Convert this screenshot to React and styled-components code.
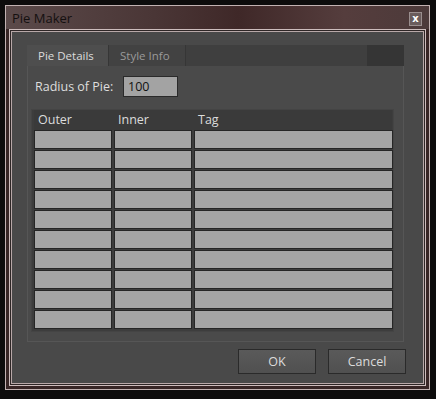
import React from 'react'
import styled, { createGlobalStyle } from 'styled-components'

const GlobalStyle = createGlobalStyle`
  html, body {
    margin: 0;
    padding: 0;
    background: #0d0c0c;
  }
  body {
    font-family: "Open Sans", "Noto Sans", "Liberation Sans", sans-serif;
  }
`

const rows = Array.from({ length: 10 })

export default function App() {
  return (
    <>
      <GlobalStyle />
      <Screen>
        <Window>
          <TitleBar>
            <Title>Pie Maker</Title>
            <CloseBtn>x</CloseBtn>
          </TitleBar>
          <Content>
            <TabGroup>
              <TabBar>
                <Tab active>Pie Details</Tab>
                <Tab>Style Info</Tab>
                <TabFill />
                <TabEnd />
              </TabBar>
              <Panel>
                <RadiusRow>
                  <Label>Radius of Pie:</Label>
                  <Input defaultValue="100" />
                </RadiusRow>
                <Table>
                  <HeaderRow>
                    <HeadCell>Outer</HeadCell>
                    <HeadCell>Inner</HeadCell>
                    <HeadCell>Tag</HeadCell>
                  </HeaderRow>
                  <Grid>
                    {rows.map((_, i) => (
                      <React.Fragment key={i}>
                        <Cell />
                        <Cell />
                        <Cell />
                      </React.Fragment>
                    ))}
                  </Grid>
                </Table>
              </Panel>
            </TabGroup>
            <Buttons>
              <Button>OK</Button>
              <Button>Cancel</Button>
            </Buttons>
          </Content>
        </Window>
      </Screen>
    </>
  )
}

const Screen = styled.div`
  width: 436px;
  height: 399px;
  padding: 5px 0 0 5px;
  box-sizing: border-box;
`
const Window = styled.div`
  width: 425px;
  height: 385px;
  box-sizing: border-box;
  border: 1px solid #c2b2b2;
  background: #382626;
  padding: 0 3px 3px 3px;
  display: flex;
  flex-direction: column;
`
const TitleBar = styled.div`
  height: 23px;
  margin: 0 -3px;
  padding: 0 7px 0 6px;
  display: flex;
  align-items: center;
  justify-content: space-between;
  background: linear-gradient(90deg, #5b4a4a 0%, #4a3636 35%, #3f2828 55%, #553d3d 80%, #4c3a3a 100%);
`
const Title = styled.div`
  font-size: 13px;
  color: #141010;
  padding-top: 1px;
`
const CloseBtn = styled.div`
  width: 13px;
  height: 14px;
  box-sizing: border-box;
  border: 1px solid #9a8e8e;
  background: #6a5c5c;
  color: #fff;
  font-family: "DejaVu Sans", sans-serif;
  font-weight: bold;
  font-size: 10px;
  line-height: 11px;
  text-align: center;
  margin-top: 2px;
`
const Content = styled.div`
  flex: 1;
  background: #494949;
  box-shadow: inset 0 0 0 1px #cdbdbd, inset 0 0 0 2px #2e2626, inset 0 0 0 3px #b8a8a8;
  padding: 16px 22px 0 18px;
  display: flex;
  flex-direction: column;
`
const TabGroup = styled.div`
  width: 377px;
  display: flex;
  flex-direction: column;
`
const TabBar = styled.div`
  height: 21px;
  display: flex;
  background: #3e3e3e;
`
const Tab = styled.div`
  width: ${p => (p.active ? '82px' : '77px')};
  box-sizing: border-box;
  padding-left: 11px;
  border-right: 1px solid #363636;
  background: ${p => (p.active ? '#4e4e4e' : '#424242')};
  color: ${p => (p.active ? '#dcdcdc' : '#9a9a9a')};
  font-size: 11.5px;
  line-height: 21px;
`
const TabFill = styled.div`
  flex: 1;
  background: #3f3f3f;
`
const TabEnd = styled.div`
  width: 37px;
  background: #353535;
`
const Panel = styled.div`
  height: 276px;
  box-sizing: border-box;
  border: 1px solid #565656;
  border-top: none;
  background: #4a4a4a;
  padding: 10px 9px 0 3px;
`
const RadiusRow = styled.div`
  display: flex;
  align-items: center;
  height: 21px;
`
const Label = styled.div`
  width: 88px;
  padding-left: 4px;
  font-size: 12.5px;
  color: #dedede;
`
const Input = styled.input`
  width: 55px;
  height: 21px;
  box-sizing: border-box;
  border: 1px solid #2a2a2a;
  background: #a3a3a3;
  color: #121212;
  font-family: inherit;
  font-size: 12.5px;
  padding: 0 0 1px 4px;
  outline: none;
`
const Table = styled.div`
  margin-top: 12px;
  width: 363px;
  box-sizing: border-box;
  background: #3d3d3d;
  border: 1px solid #444;
  padding: 0 1px 2px 2px;
`
const HeaderRow = styled.div`
  display: grid;
  grid-template-columns: 80px 80px 1fr;
  height: 20px;
  background: #3a3a3a;
`
const HeadCell = styled.div`
  padding-left: 4px;
  font-size: 12.5px;
  line-height: 20px;
  color: #dcdcdc;
`
const Grid = styled.div`
  display: grid;
  grid-template-columns: 78px 78px 199px;
  grid-auto-rows: 19px;
  column-gap: 2px;
  row-gap: 1px;
`
const Cell = styled.div`
  box-sizing: border-box;
  border: 1px solid #262626;
  background: #a5a5a5;
`
const Buttons = styled.div`
  display: flex;
  justify-content: flex-end;
  gap: 12px;
  margin-top: 7px;
  margin-right: -2px;
`
const Button = styled.button`
  width: 78px;
  height: 25px;
  box-sizing: border-box;
  border: 1px solid #2a2a2a;
  background: linear-gradient(180deg, #5a5a5a 0%, #505050 100%);
  color: #dcdcdc;
  font-family: inherit;
  font-size: 12.5px;
  padding: 0;
`
